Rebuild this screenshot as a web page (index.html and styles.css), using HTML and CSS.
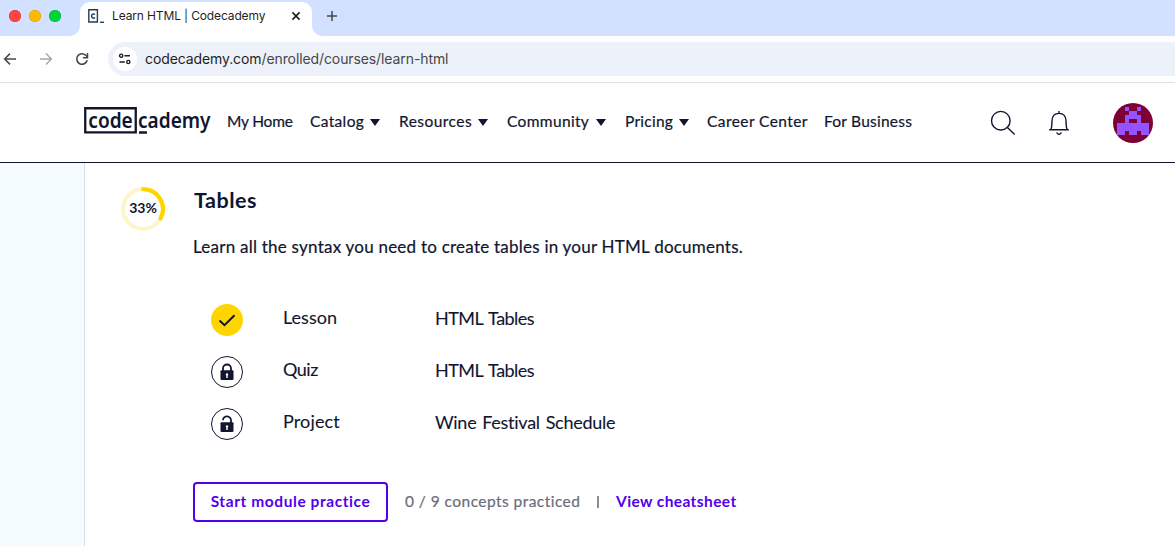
FILE: index.html
```html
<!DOCTYPE html>
<html lang="en">
<head>
<meta charset="utf-8">
<title>Learn HTML | Codecademy</title>
<link rel="stylesheet" href="styles.css">
</head>
<body>
<div class="tabs">
  <div class="lights"><i class="red"></i><i class="amber"></i><i class="green"></i></div>
  <div class="tab">
    <svg class="favicon" width="18" height="16" viewBox="0 0 18 16"><path d="M.8 1.700h8.600v12.300H.8z" fill="none" stroke="#204056" stroke-width="1.400"/><path d="M7 6.500C5.300 5.200 3.600 6.200 3.600 8s1.700 2.800 3.400 1.600" fill="none" stroke="#204056" stroke-width="1.500"/><path d="M12 14.300h4" stroke="#204056" stroke-width="1.400"/></svg>
    <span class="tab-title">Learn HTML | Codecademy</span>
    <svg width="10" height="10" viewBox="0 0 10 10"><path d="M1.400 1.400l7.200 7.200M8.600 1.400L1.400 8.600" stroke="#1f1f1f" stroke-width="1.600"/></svg>
  </div>
  <svg class="plus" width="12" height="12" viewBox="0 0 12 12"><path d="M6 1v10M1 6h10" stroke="#474747" stroke-width="1.500"/></svg>
</div>
<div class="toolbar">
  <svg class="back" width="14" height="14" viewBox="0 0 14 14"><path d="M13 7H2M7 1.600L1.600 7 7 12.400" fill="none" stroke="#474747" stroke-width="1.500"/></svg>
  <svg class="forward" width="14" height="14" viewBox="0 0 14 14"><path d="M1 7h11M7 1.600L12.400 7 7 12.400" fill="none" stroke="#a6a6a6" stroke-width="1.400"/></svg>
  <svg class="reload" width="14" height="14" viewBox="0 0 14 14"><path d="M12.200 8.300A5.300 5.300 0 1 1 11.300 3.800L12.300 5" fill="none" stroke="#474747" stroke-width="1.600"/><path d="M12.500 1v4.800H7.900" fill="none" stroke="#474747" stroke-width="1.500"/></svg>
  <div class="address">
    <span class="site"><svg width="14" height="12" viewBox="0 0 14 12"><g fill="none" stroke="#1f1f1f" stroke-width="1.400"><circle cx="3.200" cy="2.700" r="1.600"/><path d="M6.500 2.700H12M1.500 9h5.300"/><circle cx="10.300" cy="9" r="1.600"/></g></svg></span>
    <span class="url">codecademy.com<span class="path">/enrolled/courses/learn-html</span></span>
  </div>
</div>
<header class="header">
  <svg class="logo" width="136" height="48" viewBox="0 -10 136 48"><path d="M1.250 1.250h50.500v24.200H1.250z" fill="none" stroke="#10162f" stroke-width="2.300"/><path d="M55 25.500h8" stroke="#10162f" stroke-width="2.500"/><text x="4.300" y="21" textLength="44.500" lengthAdjust="spacingAndGlyphs">code</text><text x="54" y="21" textLength="72.500" lengthAdjust="spacingAndGlyphs">cademy</text></svg>
  <nav class="nav">
    <a class="home">My Home</a>
    <a class="catalog">Catalog<i></i></a>
    <a class="resources">Resources<i></i></a>
    <a class="community">Community<i></i></a>
    <a class="pricing">Pricing<i></i></a>
    <a class="career">Career Center</a>
    <a class="business">For Business</a>
  </nav>
  <div class="tools">
    <svg width="26" height="26" viewBox="0 0 26 26"><g fill="none" stroke="#10162f" stroke-width="1.400"><circle cx="10.800" cy="10.700" r="9.300"/><path d="M17.400 17.400l7.300 7.200"/></g></svg>
    <svg width="22" height="26" viewBox="0 0 22 26"><g fill="none" stroke="#10162f" stroke-width="1.400"><path d="M11 1v2.500M1.200 19.800h19.600M2.800 19.800c1.400-3 1-6 1.200-9.300C4.300 6 7 3.400 11 3.400s6.700 2.600 7 7.100c.2 3.300-.2 6.300 1.200 9.300"/><path d="M8.700 22.300c.6 2.500 4 2.500 4.600 0"/></g></svg>
    <svg class="avatar" width="40" height="40" viewBox="0 0 10 10"><path d="M0 0h10v10H0z" fill="#7d0037"/><path d="M3 1h1v1h2V1h1v1H6v1h1v2h2v3H7V7H6v1H4V7H3v1H1V5h2V3h1V2H3zM4 4v1h2V4z" fill="#9353ff" fill-rule="evenodd" shape-rendering="crispEdges"/></svg>
  </div>
</header>
<main class="page">
  <section class="module">
    <div class="progress">
      <svg width="44" height="44" viewBox="0 0 44 44"><g fill="none" stroke-width="4.200"><circle cx="22" cy="22" r="19.900" stroke="#fff5cc"/><path d="M22 2.100A19.900 19.900 0 0 1 39.600 31.300" stroke="#ffd500" stroke-linecap="round"/></g></svg>
      <span>33%</span>
    </div>
    <div class="content">
      <h2>Tables</h2>
      <p class="desc">Learn all the syntax you need to create tables in your HTML documents.</p>
      <ul class="items">
        <li><svg width="32" height="32" viewBox="0 0 32 32"><circle cx="16" cy="16" r="16" fill="#ffd500"/><path d="M8.500 16.500l5 4.700 10-10" fill="none" stroke="#10162f" stroke-width="2"/></svg><span class="kind lesson">Lesson</span><span class="name">HTML Tables</span></li>
        <li><svg width="32" height="32" viewBox="0 0 32 32"><circle cx="16" cy="16" r="15.500" fill="#fff" stroke="#10162f"/><path d="M12 15v-2.500a4 4 0 0 1 8 0V15" fill="none" stroke="#10162f" stroke-width="1.800"/><rect x="9.500" y="14.300" width="13" height="9.700" rx="1" fill="#10162f"/><path d="M16 17.300a1.200 1.200 0 0 1 .7 2.200V22h-1.400v-2.500a1.200 1.200 0 0 1 .7-2.200z" fill="#fff"/></svg><span class="kind quiz">Quiz</span><span class="name">HTML Tables</span></li>
        <li><svg width="32" height="32" viewBox="0 0 32 32"><circle cx="16" cy="16" r="15.500" fill="#fff" stroke="#10162f"/><path d="M12 12.300a4 4 0 0 1 8 .2V15" fill="none" stroke="#10162f" stroke-width="1.800"/><rect x="9.500" y="14.300" width="13" height="9.700" rx="1" fill="#10162f"/><path d="M16 17.300a1.200 1.200 0 0 1 .7 2.200V22h-1.400v-2.500a1.200 1.200 0 0 1 .7-2.200z" fill="#fff"/></svg><span class="kind project">Project</span><span class="name wine">Wine Festival Schedule</span></li>
      </ul>
      <div class="actions">
        <button class="practice">Start module practice</button>
        <span class="count">0 / 9 concepts practiced</span>
        <span class="bar"></span>
        <a class="cheatsheet">View cheatsheet</a>
      </div>
    </div>
  </section>
</main>
</body>
</html>
```
FILE: styles.css
```css
* { box-sizing: border-box; }
body { margin: 0; height: 546px; overflow: hidden; display: flex; flex-direction: column; background: #fff; color: #10162f; font-family: Lato, "Liberation Sans", sans-serif; font-variant-ligatures: none; white-space: nowrap; }
svg { display: block; flex: none; }

.tabs { height: 36px; flex: none; display: flex; align-items: flex-start; background: #d1e1ff; font: 12px Inter, sans-serif; }
.lights { display: flex; gap: 8px; padding: 10px 0 0 9px; width: 80px; }
.lights i { width: 12px; height: 12px; border-radius: 50%; }
.red { background: #ff4443; box-shadow: inset 0 0 0 .5px #d83232; }
.amber { background: #ffb900; box-shadow: inset 0 0 0 .5px #d99c00; }
.green { background: #00d33e; box-shadow: inset 0 0 0 .5px #00ad32; }
.tab { position: relative; width: 232px; height: 34px; margin-top: 2px; padding: 0 11px 6px 8px; display: flex; align-items: center; background: #fff; border-radius: 10px 10px 0 0; color: #1f1f1f; }
.tab::before, .tab::after { content: ""; position: absolute; bottom: 0; width: 10px; height: 10px; }
.tab::before { left: -10px; background: radial-gradient(circle at 0 0, transparent 9.500px, #fff 10px); }
.tab::after { right: -10px; background: radial-gradient(circle at 100% 0, transparent 9.500px, #fff 10px); }
.tab-title { margin-left: 6px; padding-bottom: 1px; flex: 1; letter-spacing: -.13px; }
.plus { margin: 10px 0 0 14px; }

.toolbar { height: 47px; flex: none; display: flex; align-items: center; border-bottom: 1px solid #dfe0e3; }
.back { margin-left: 3px; }
.forward { margin-left: 22px; }
.reload { margin-left: 22px; }
.address { flex: 1; height: 34px; margin-left: 19px; padding-left: 5px; display: flex; align-items: center; background: #edf1fa; border-radius: 17px 0 0 17px; }
.site { width: 24px; height: 24px; border-radius: 50%; background: #fff; display: grid; place-items: center; }
.url { margin-left: 8px; padding-bottom: 1px; font: 14px Inter, sans-serif; color: #1f1f1f; letter-spacing: -.1px; }
.path { color: #474747; }

.header { height: 80px; flex: none; display: flex; align-items: center; padding: 0 22px 0 84px; border-bottom: 1px solid #10162f; }
.logo { margin-bottom: 3px; }
.logo text { font: 600 22px "Noto Sans", sans-serif; fill: #10162f; }
.nav { display: flex; margin: 0 0 3px 7px; font-size: 15.500px; line-height: 20px; letter-spacing: .35px; -webkit-text-stroke: .2px currentColor; }
.nav a { display: flex; align-items: center; justify-content: space-between; }
.nav i { border: 5px solid transparent; border-top: 7px solid #10162f; border-bottom: 0; margin-top: 3px; }
.home { width: 66px; margin-right: 17px; letter-spacing: -.2px; }
.catalog { width: 70px; margin-right: 19px; }
.resources { width: 89px; margin-right: 19px; letter-spacing: .45px; }
.community { width: 99px; margin-right: 19px; }
.pricing { width: 64px; margin-right: 18px; letter-spacing: .25px; }
.career { width: 101px; margin-right: 16px; letter-spacing: .43px; }
.business { width: 88px; letter-spacing: .23px; }
.tools { display: flex; align-items: center; margin-left: auto; }
.tools svg:nth-child(2) { margin: 0 43px 0 32px; }
.avatar { border-radius: 50%; }

.page { flex: 1; display: flex; padding-left: 84px; background: #f5fcff; }
.module { flex: 1; display: flex; padding-left: 36px; background: #fff; border-left: 1px solid #dcdde2; }
.progress { display: grid; width: 44px; height: 44px; margin-top: 24px; place-items: center; font-size: 14px; font-weight: 700; }
.progress > * { grid-area: 1 / 1; }
.progress span { margin-bottom: 3px; }
.content { margin-left: 28px; }
h2 { margin: 24px 0 0 1px; font-size: 21.500px; line-height: 26px; letter-spacing: .5px; }
.desc { margin: 22px 0 0; font-size: 17px; line-height: 24px; letter-spacing: .235px; -webkit-text-stroke: .2px currentColor; }
.items { list-style: none; margin: 45px 0 0 18px; padding: 0; display: grid; gap: 20px; font-size: 18px; line-height: 24px; -webkit-text-stroke: .1px currentColor; }
.items li { display: grid; grid-template-columns: 72px 152px auto; height: 32px; align-items: start; }
.kind { margin-top: 1px; }
.quiz { letter-spacing: -.5px; }
.project { letter-spacing: .15px; }
.name { margin-top: 2px; letter-spacing: -.55px; word-spacing: 2px; }
.wine { letter-spacing: -.27px; word-spacing: 1.500px; }
.actions { display: flex; align-items: center; margin-top: 42px; height: 40px; font-size: 15.500px; }
.practice { width: 195px; height: 40px; padding: 0 0 2px; border: 2px solid #5300eb; border-radius: 4px; background: #fff; color: #5300eb; font: 700 15.500px Lato, sans-serif; letter-spacing: .58px; }
.count { width: 175px; margin: 0 0 2px 17px; color: #6a6d7d; letter-spacing: .45px; -webkit-text-stroke: .2px currentColor; }
.bar { width: 1.500px; height: 12px; margin: 0 17.500px 0 17px; background: #8a8c99; }
.cheatsheet { margin-bottom: 2px; color: #5300eb; font-weight: 700; letter-spacing: .4px; }
```
